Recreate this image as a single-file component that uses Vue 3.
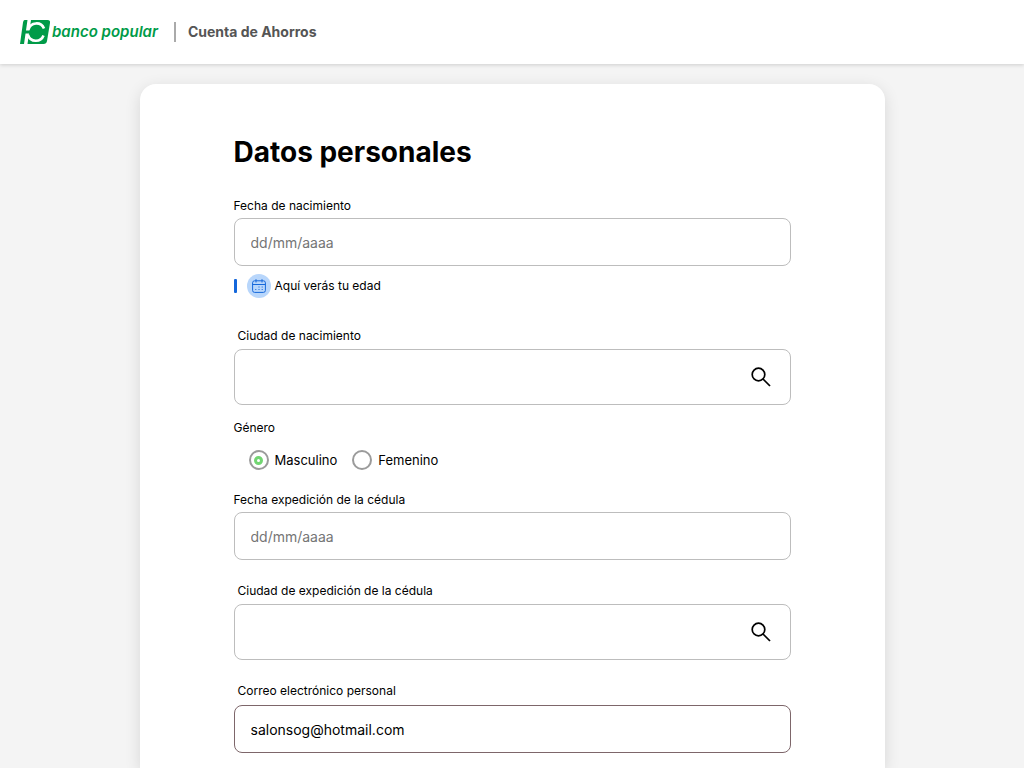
<script setup>
import { ref } from 'vue'

const birthDate = ref('')
const birthCity = ref('')
const gender = ref('m')
const issueDate = ref('')
const issueCity = ref('')
const email = ref('salonsog@hotmail.com')
</script>

<template>
  <div class="page">
    <header class="topbar">
      <a class="brand" href="#" aria-label="banco popular">
        <svg class="mark" viewBox="0 0 31 24" aria-hidden="true">
          <path d="M4.500 0H7.500L4 24H0L3 2.500Q3.300 0 4.500 0Z" fill="#009b48" />
          <path d="M11 0H27.500Q30.500 0 30 3L27 21Q26.500 24 23.500 24H7.500Z" fill="#009b48" />
          <path d="M8.500 9.500A8.200 8.200 0 0 1 24 8.500M8 15A8.200 8.200 0 0 0 23.500 15.500" fill="none" stroke="#fff" stroke-width="2.600" />
          <path d="M3 10.500H12V13.500H3Z" fill="#009b48" />
          <circle cx="16.300" cy="12" r="5" fill="#009b48" />
        </svg>
        <span class="wordmark">banco popular</span>
      </a>
      <span class="product">Cuenta de Ahorros</span>
    </header>

    <main class="card">
      <h1>Datos personales</h1>
      <form @submit.prevent>
        <div class="field">
          <label for="birth-date">Fecha de nacimiento</label>
          <input id="birth-date" v-model="birthDate" class="box" type="text" placeholder="dd/mm/aaaa">
          <p class="age">
            <span class="calendar">
              <svg viewBox="0 0 14 14" aria-hidden="true">
                <rect x="0.600" y="1.800" width="12.800" height="11.600" rx="2" />
                <path d="M.6 5.500H13.400M4 .2V3.500M10 .2V3.500" />
                <path d="M3.300 10.500H4.300M6.500 10.500H7.500M6.500 8H7.500M9.700 8H10.700M9.700 10.500H10.700" />
              </svg>
            </span>
            Aquí verás tu edad
          </p>
        </div>

        <div class="field city">
          <label for="birth-city">Ciudad de nacimiento</label>
          <div class="search">
            <input id="birth-city" v-model="birthCity" type="text">
            <button type="button" aria-label="Buscar ciudad de nacimiento">
              <svg viewBox="0 0 20 20" aria-hidden="true"><circle cx="7.500" cy="7.500" r="6.300" /><path d="M12 12L19 19" /></svg>
            </button>
          </div>
        </div>

        <fieldset>
          <legend>Género</legend>
          <div class="options">
            <label><input v-model="gender" type="radio" name="gender" value="m">Masculino</label>
            <label><input v-model="gender" type="radio" name="gender" value="f">Femenino</label>
          </div>
        </fieldset>

        <div class="field issued">
          <label for="issue-date">Fecha expedición de la cédula</label>
          <input id="issue-date" v-model="issueDate" class="box" type="text" placeholder="dd/mm/aaaa">
        </div>

        <div class="field city">
          <label for="issue-city">Ciudad de expedición de la cédula</label>
          <div class="search">
            <input id="issue-city" v-model="issueCity" type="text">
            <button type="button" aria-label="Buscar ciudad de expedición">
              <svg viewBox="0 0 20 20" aria-hidden="true"><circle cx="7.500" cy="7.500" r="6.300" /><path d="M12 12L19 19" /></svg>
            </button>
          </div>
        </div>

        <div class="field mail">
          <label for="email">Correo electrónico personal</label>
          <input id="email" v-model="email" class="box filled" type="email">
        </div>
      </form>
    </main>
  </div>
</template>

<style>
body {
  background: #f4f4f4;
}
</style>

<style scoped>
.page,
.page * {
  box-sizing: border-box;
}

.page {
  display: flex;
  flex-direction: column;
  min-height: 100vh;
  background: #f4f4f4;
  color: #000;
  font-family: Inter, "Liberation Sans", sans-serif;
}

.topbar {
  display: flex;
  align-items: center;
  height: 64px;
  padding: 0 20px;
  background: #fff;
  box-shadow: 0 1px 4px rgba(0, 0, 0, 0.16);
}

.brand {
  display: flex;
  align-items: center;
  gap: 1px;
  color: #009b48;
  text-decoration: none;
}

.mark {
  width: 31px;
  height: 24px;
}

.wordmark {
  font-size: 15px;
  font-style: italic;
  font-weight: 600;
  line-height: 20px;
  font-feature-settings: "cv11";
}

.product {
  margin-left: 16px;
  padding-left: 12px;
  border-left: 2px solid #aaa;
  color: #555;
  font-size: 14px;
  font-weight: 700;
  line-height: 20px;
}

.card {
  flex: 1;
  width: calc(100% - 48px);
  max-width: 745px;
  margin: 20px auto 0;
  padding: 50px 94px 14px;
  border-radius: 16px 16px 0 0;
  background: #fff;
  box-shadow: 0 4px 16px rgba(0, 0, 0, 0.12);
}

h1 {
  margin: 0 0 28px;
  font-size: 28px;
  font-weight: 700;
  line-height: 36px;
}

.field {
  display: flex;
  flex-direction: column;
  gap: 4px;
}

.field > label,
legend {
  font-size: 12px;
  line-height: 16px;
}

.box {
  width: 100%;
  height: 48px;
  padding: 0 16px;
  border: 1px solid #bdbdbd;
  border-radius: 8px;
  background: #fff;
  color: #000;
  font: 14px/20px Inter, "Liberation Sans", sans-serif;
}

.box::placeholder {
  color: #757575;
  opacity: 1;
}

.filled {
  border-color: #7d666a;
}

.age {
  display: flex;
  align-items: center;
  gap: 4px;
  height: 24px;
  margin: 4px 0 0;
  font-size: 12px;
  line-height: 16px;
}

.age::before {
  content: "";
  width: 3px;
  height: 14px;
  margin-right: 6px;
  border-radius: 1px;
  background: #1467db;
}

.calendar {
  display: flex;
  align-items: center;
  justify-content: center;
  width: 24px;
  height: 24px;
  border-radius: 50%;
  background: #b8d6fb;
}

.calendar svg {
  width: 14px;
  height: 14px;
  fill: none;
  stroke: #1467db;
}

.city {
  gap: 5px;
  margin-top: 30px;
}

.city > label,
.mail > label {
  padding-left: 4px;
}

.search {
  display: flex;
  align-items: center;
  height: 56px;
  border: 1px solid #bdbdbd;
  border-radius: 8px;
}

.search input {
  flex: 1;
  min-width: 0;
  height: 100%;
  padding: 0 16px;
  border: 0;
  border-radius: 8px;
  background: transparent;
  font: 14px/20px Inter, "Liberation Sans", sans-serif;
}

.search button {
  display: flex;
  margin-right: 19px;
  padding: 0;
  border: 0;
  background: none;
}

.search svg {
  width: 20px;
  height: 20px;
  fill: none;
  stroke: #000;
  stroke-width: 1.7;
}

fieldset {
  margin: 15px 0 0;
  padding: 0;
  border: 0;
}

legend {
  padding: 0;
}

.options {
  display: flex;
  gap: 15px;
  padding: 14px 15px 0;
}

.options label {
  display: flex;
  align-items: center;
  gap: 6px;
  font-size: 13px;
  line-height: 20px;
}

.options input {
  appearance: none;
  display: grid;
  place-items: center;
  width: 20px;
  height: 20px;
  margin: 0;
  border: 2px solid #9b9b9b;
  border-radius: 50%;
}

.options input:checked::before {
  content: "";
  width: 9px;
  height: 9px;
  box-sizing: border-box;
  border: 3px solid #72d572;
  border-radius: 50%;
}

.issued {
  margin-top: 22px;
}

.issued + .city {
  margin-top: 23px;
}

.mail {
  gap: 6px;
  margin-top: 23px;
}
</style>
